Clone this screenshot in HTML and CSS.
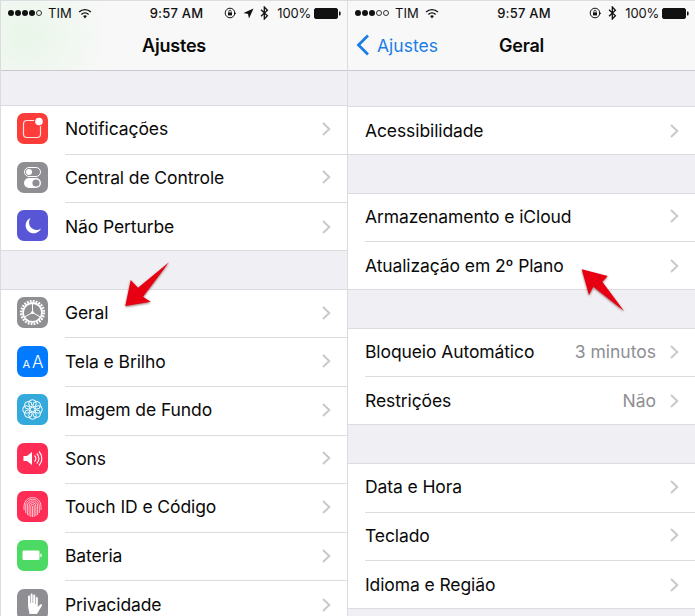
FILE: index.html
```html
<!DOCTYPE html>
<html lang="pt-BR">
<head>
    <meta charset="UTF-8">
    <title>Ajustes e Geral</title>
    <link rel="stylesheet" href="styles.css">
</head>
<body>
    <svg class="defs" width="0" height="0">
        <symbol id="chevron" viewBox="0 0 9 14"><path d="M1 1l6.300 6L1 13" fill="none" stroke="#c7c7cc" stroke-width="1.900"/></symbol>
        <symbol id="wifi" viewBox="0 0 14 11"><path d="M.6 3.600a9 9 0 0 1 12.800 0l-1 1a7.600 7.600 0 0 0-10.800 0zM2.900 5.900a5.800 5.800 0 0 1 8.200 0l-1 1a4.400 4.400 0 0 0-6.200 0zM5.100 8.100a2.700 2.700 0 0 1 3.800 0L7 10.400z" fill="#111"/></symbol>
        <symbol id="lock" viewBox="0 0 13 12"><circle cx="6" cy="6" r="4.800" fill="none" stroke="#111" stroke-width="1"/><rect x="4" y="5.400" width="4" height="3" fill="#111"/><path d="M4.800 5.400V4.400a1.200 1.200 0 0 1 2.400 0v1" fill="none" stroke="#111" stroke-width=".8"/><path d="M10 5.200l2.400 1L10 7.400z" fill="#111"/></symbol>
        <symbol id="bluetooth" viewBox="0 0 9 14"><path d="M1 3.800l6.400 6L4.300 13V1l3.100 3.200L1 10.200" fill="none" stroke="#111" stroke-width="1.300"/></symbol>
        <symbol id="battery" viewBox="0 0 27 11"><rect x=".5" y=".5" width="23" height="10" rx="1.500" fill="#111" stroke="#111"/><path d="M25 3.600h.6a1 1 0 0 1 1 1v1.800a1 1 0 0 1-1 1H25z" fill="#111"/></symbol>
    </svg>

    <div class="screens">
        <section class="screen">
            <header class="top top-tinted">
                <div class="status">
                    <div class="status-left">
                        <span class="signal"><i></i><i></i><i></i><i></i><i class="off"></i></span>
                        <span>TIM</span>
                        <svg class="ico-wifi"><use href="#wifi"/></svg>
                    </div>
                    <div class="status-time">9:57 AM</div>
                    <div class="status-right">
                        <svg class="ico-lock"><use href="#lock"/></svg>
                        <svg class="ico-location" viewBox="0 0 11 11"><path d="M10.500.5L6 10.500 5 6 .5 5z" fill="#111"/></svg>
                        <svg class="ico-bt"><use href="#bluetooth"/></svg>
                        <span class="battery-pct">100%</span>
                        <svg class="ico-battery"><use href="#battery"/></svg>
                    </div>
                </div>
                <div class="nav"><h1>Ajustes</h1></div>
            </header>

            <div class="group group-first">
                <div class="row">
                    <svg class="icon" viewBox="0 0 31 31">
                        <rect width="31" height="31" rx="7" fill="#fc3d39"/>
                        <rect x="6.500" y="7.500" width="17" height="17" rx="3.500" fill="none" stroke="#fff" stroke-width="1.200" opacity=".85"/>
                        <circle cx="22" cy="8.500" r="5" fill="#fc3d39"/>
                        <circle cx="22" cy="8.500" r="3.800" fill="#fff"/>
                    </svg>
                    <div class="row-body"><span class="label">Notificações</span><svg class="chevron"><use href="#chevron"/></svg></div>
                </div>
                <div class="row">
                    <svg class="icon" viewBox="0 0 31 31">
                        <rect width="31" height="31" rx="7" fill="#8e8e93"/>
                        <rect x="7.500" y="5.500" width="16" height="9" rx="4.500" fill="none" stroke="#fff" stroke-width="1"/>
                        <circle cx="12" cy="10" r="3" fill="#fff"/>
                        <rect x="7" y="16" width="17" height="10" rx="5" fill="#fff"/>
                        <circle cx="19" cy="21" r="3.600" fill="#8e8e93"/>
                    </svg>
                    <div class="row-body"><span class="label">Central de Controle</span><svg class="chevron"><use href="#chevron"/></svg></div>
                </div>
                <div class="row">
                    <svg class="icon" viewBox="0 0 31 31">
                        <rect width="31" height="31" rx="7" fill="#5856d6"/>
                        <path d="M13.500 8a8 8 0 1 0 10.500 10.500 7.500 7.500 0 0 1-10.500-10.500z" fill="#fff"/>
                    </svg>
                    <div class="row-body"><span class="label">Não Perturbe</span><svg class="chevron"><use href="#chevron"/></svg></div>
                </div>
            </div>

            <div class="group">
                <div class="row">
                    <svg class="icon" viewBox="0 0 31 31">
                        <rect width="31" height="31" rx="7" fill="#8e8e93"/>
                        <circle cx="15.500" cy="15.500" r="9.500" fill="none" stroke="#fff" stroke-width="1.800"/>
                        <circle cx="15.500" cy="15.500" r="11.400" fill="none" stroke="#fff" stroke-width="2.400" stroke-dasharray="1.800 1.180"/>
                        <path d="M15.500 15.500V7M15.500 15.500l7.400 4.200M15.500 15.500l-7.400 4.200" stroke="#fff" stroke-width="1"/>
                        <circle cx="15.500" cy="15.500" r="1.600" fill="#fff"/>
                    </svg>
                    <div class="row-body"><span class="label">Geral</span><svg class="chevron"><use href="#chevron"/></svg></div>
                </div>
                <div class="row">
                    <svg class="icon" viewBox="0 0 31 31">
                        <rect width="31" height="31" rx="7" fill="#007aff"/>
                        <text x="5.500" y="21.500" class="aa-small">A</text>
                        <text x="15" y="21.500" class="aa-big">A</text>
                    </svg>
                    <div class="row-body"><span class="label">Tela e Brilho</span><svg class="chevron"><use href="#chevron"/></svg></div>
                </div>
                <div class="row">
                    <svg class="icon" viewBox="0 0 31 31">
                        <rect width="31" height="31" rx="7" fill="#34aadc"/>
                        <g fill="none" stroke="#fff" stroke-width="1">
                            <circle cx="15.500" cy="9.500" r="3.800"/><circle cx="15.500" cy="21.500" r="3.800"/>
                            <circle cx="9.500" cy="15.500" r="3.800"/><circle cx="21.500" cy="15.500" r="3.800"/>
                            <circle cx="11.300" cy="11.300" r="3.800"/><circle cx="19.700" cy="11.300" r="3.800"/>
                            <circle cx="11.300" cy="19.700" r="3.800"/><circle cx="19.700" cy="19.700" r="3.800"/>
                        </g>
                    </svg>
                    <div class="row-body"><span class="label">Imagem de Fundo</span><svg class="chevron"><use href="#chevron"/></svg></div>
                </div>
                <div class="row">
                    <svg class="icon" viewBox="0 0 31 31">
                        <rect width="31" height="31" rx="7" fill="#ff2d55"/>
                        <path d="M6.500 13h3.500l5-4v13l-5-4H6.500z" fill="#fff"/>
                        <path d="M17.500 12.500a4 4 0 0 1 0 6M19.800 10.500a7 7 0 0 1 0 10M22 8.500a10 10 0 0 1 0 14" fill="none" stroke="#fff" stroke-width="1.100"/>
                    </svg>
                    <div class="row-body"><span class="label">Sons</span><svg class="chevron"><use href="#chevron"/></svg></div>
                </div>
                <div class="row">
                    <svg class="icon" viewBox="0 0 31 31">
                        <rect width="31" height="31" rx="7" fill="#ff2d55"/>
                        <g fill="none" stroke="#fff" stroke-width=".7">
                            <path d="M7 19v-4a8.500 8.500 0 0 1 17 0v4"/>
                            <path d="M8.700 22v-7a6.800 6.800 0 0 1 13.600 0v7"/>
                            <path d="M10.400 24v-9a5.100 5.100 0 0 1 10.200 0v9"/>
                            <path d="M12.100 25v-10a3.400 3.400 0 0 1 6.800 0v10"/>
                            <path d="M13.800 26V15a1.700 1.700 0 0 1 3.400 0v11"/>
                            <path d="M15.500 26V15"/>
                        </g>
                    </svg>
                    <div class="row-body"><span class="label">Touch ID e Código</span><svg class="chevron"><use href="#chevron"/></svg></div>
                </div>
                <div class="row">
                    <svg class="icon" viewBox="0 0 31 31">
                        <rect width="31" height="31" rx="7" fill="#4cd964"/>
                        <rect x="5.500" y="10.500" width="17" height="9.500" rx="1.200" fill="#fff"/>
                        <rect x="23.300" y="13.800" width="1.300" height="3" fill="#fff"/>
                    </svg>
                    <div class="row-body"><span class="label">Bateria</span><svg class="chevron"><use href="#chevron"/></svg></div>
                </div>
                <div class="row">
                    <svg class="icon" viewBox="0 0 31 31">
                        <rect width="31" height="31" rx="7" fill="#8e8e93"/>
                        <path d="M11 17V7.500a1 1 0 0 1 2 0V14h.6V5.500a1 1 0 0 1 2 0V14h.6V6.500a1 1 0 0 1 2 0V15h.6V9a1 1 0 0 1 2 0v9l2.500-2.500c1-1 2.400.2 1.600 1.300L20 25H12.500z" fill="#fff"/>
                    </svg>
                    <div class="row-body"><span class="label">Privacidade</span><svg class="chevron"><use href="#chevron"/></svg></div>
                </div>
            </div>
        </section>

        <section class="screen screen-right">
            <header class="top">
                <div class="status">
                    <div class="status-left">
                        <span class="signal"><i></i><i></i><i></i><i class="off"></i><i class="off"></i></span>
                        <span>TIM</span>
                        <svg class="ico-wifi"><use href="#wifi"/></svg>
                    </div>
                    <div class="status-time">9:57 AM</div>
                    <div class="status-right">
                        <svg class="ico-lock"><use href="#lock"/></svg>
                        <svg class="ico-bt"><use href="#bluetooth"/></svg>
                        <span class="battery-pct">100%</span>
                        <svg class="ico-battery"><use href="#battery"/></svg>
                    </div>
                </div>
                <div class="nav">
                    <div class="back">
                        <svg class="back-arrow" viewBox="0 0 14 22"><path d="M12 1.500L2.500 11l9.500 9.500" fill="none" stroke="#1a7ee6" stroke-width="2.800"/></svg>
                        <span>Ajustes</span>
                    </div>
                    <h1>Geral</h1>
                </div>
            </header>

            <div class="group group-first">
                <div class="row row-plain"><div class="row-body"><span class="label">Acessibilidade</span><svg class="chevron"><use href="#chevron"/></svg></div></div>
            </div>

            <div class="group">
                <div class="row row-plain"><div class="row-body"><span class="label">Armazenamento e iCloud</span><svg class="chevron"><use href="#chevron"/></svg></div></div>
                <div class="row row-plain"><div class="row-body"><span class="label">Atualização em 2º Plano</span><svg class="chevron"><use href="#chevron"/></svg></div></div>
            </div>

            <div class="group">
                <div class="row row-plain"><div class="row-body"><span class="label">Bloqueio Automático</span><span class="value">3 minutos</span><svg class="chevron"><use href="#chevron"/></svg></div></div>
                <div class="row row-plain"><div class="row-body"><span class="label">Restrições</span><span class="value">Não</span><svg class="chevron"><use href="#chevron"/></svg></div></div>
            </div>

            <div class="group">
                <div class="row row-plain"><div class="row-body"><span class="label">Data e Hora</span><svg class="chevron"><use href="#chevron"/></svg></div></div>
                <div class="row row-plain"><div class="row-body"><span class="label">Teclado</span><svg class="chevron"><use href="#chevron"/></svg></div></div>
                <div class="row row-plain"><div class="row-body"><span class="label">Idioma e Região</span><svg class="chevron"><use href="#chevron"/></svg></div></div>
            </div>
        </section>
    </div>

    <!-- red arrows drawn over the screenshot -->
    <svg class="arrow arrow-left" viewBox="120 258 54 52"><path d="M125.300 306L130.700 280 138 287.700 169 262.300 143 296.700 150.700 301.700z"/></svg>
    <svg class="arrow arrow-right" viewBox="578 265 50 50"><path d="M581.700 269.300L607.700 276 602.300 281.700 624 311 593.300 286.700 589 295z"/></svg>
</body>
</html>
```

FILE: styles.css
```css
* {
    margin: 0;
    padding: 0;
    box-sizing: border-box;
}

html, body {
    width: 695px;
    height: 616px;
    overflow: hidden;
}

body {
    position: relative;
    background: #fff;
    color: #0a0a0a;
    font-family: Inter, "Liberation Sans", sans-serif;
}

.defs {
    position: absolute;
}

.screens {
    display: flex;
    height: 616px;
    padding-top: 1px;
    padding-left: 1px;
    background: #dcdce0;
}

.screen {
    width: 346px;
    height: 615px;
    overflow: hidden;
    background: #efeff4;
    margin-right: 1px;
}

.screen-right {
    flex: 1;
    margin-right: 0;
}

/* status bar + nav bar */
.top {
    height: 70px;
    background: #f8f8f8;
    border-bottom: 1px solid #c9c9ce;
}

.top-tinted {
    background: radial-gradient(ellipse 80px 70px at 25px 35px, #e9f6e9, #f7f8f7 100%);
}

.status {
    display: grid;
    grid-template-columns: 1fr auto 1fr;
    align-items: center;
    height: 24px;
    padding: 0 6px 0 7px;
    font-size: 13px;
    color: #111;
}

.status-left, .status-right {
    display: flex;
    align-items: center;
}

.status-left {
    gap: 6px;
}

.status-right {
    justify-content: flex-end;
    gap: 6px;
}

.status-time {
    font-weight: 500;
    letter-spacing: 0.2px;
    transform: translateX(2px);
}

.signal {
    display: flex;
    gap: 1px;
}

.signal i {
    width: 6px;
    height: 6px;
    border-radius: 50%;
    background: #111;
}

.signal i.off {
    background: none;
    border: 1px solid #333;
}

.battery-pct {
    letter-spacing: -0.2px;
    margin-left: 2px;
}

.ico-wifi { width: 14px; height: 11px; }
.ico-lock { width: 13px; height: 12px; }
.ico-location { width: 11px; height: 11px; }
.ico-bt { width: 9px; height: 14px; }
.ico-battery { width: 27px; height: 11px; margin-left: -3px; }

.nav {
    position: relative;
    height: 41px;
    display: flex;
    align-items: center;
    justify-content: center;
}

.nav h1 {
    font-size: 18px;
    font-weight: 600;
    letter-spacing: -0.2px;
}

.back {
    position: absolute;
    left: 8px;
    top: 9px;
    display: flex;
    align-items: center;
    gap: 7px;
    font-size: 17.500px;
    color: #1a7ee6;
}

.back-arrow {
    width: 14px;
    height: 22px;
}

/* settings lists */
.group {
    margin-top: 37.600px;
    background: #fff;
    border-top: 1px solid #dcdce0;
    border-bottom: 1px solid #dcdce0;
}

.group-first {
    margin-top: 34px;
}

.screen-right .group-first {
    margin-top: 35px;
}

.row {
    display: flex;
    align-items: center;
    height: 48.600px;
    padding-left: 16px;
}

.row:last-child {
    height: 47px;
}

.row-plain {
    padding-left: 0;
}

.icon {
    flex: none;
    width: 31px;
    height: 31px;
    margin-bottom: 3px;
}

.row:last-child .icon {
    margin-bottom: 1.400px;
}

.row-body {
    flex: 1;
    min-width: 0;
    height: 100%;
    margin-left: 17px;
    padding-right: 16px;
    padding-bottom: 2px;
    display: flex;
    align-items: center;
    border-bottom: 1px solid #dcdce0;
}

.row:last-child .row-body {
    border-bottom: 0;
    padding-bottom: 0;
}

.label {
    flex: 1;
    font-size: 17.500px;
    letter-spacing: -0.1px;
}

.value {
    font-size: 17.500px;
    color: #8e8e93;
    margin-right: 14px;
}

.chevron {
    flex: none;
    width: 9px;
    height: 14px;
}

.aa-small {
    font-size: 11px;
    fill: #fff;
}

.aa-big {
    font-size: 17px;
    font-weight: 300;
    fill: #fff;
}

.arrow {
    position: absolute;
    fill: #e60012;
    filter: drop-shadow(0 1px 1px rgba(90, 0, 0, 0.6));
}

.arrow-left {
    left: 120px;
    top: 258px;
    width: 54px;
    height: 52px;
}

.arrow-right {
    left: 578px;
    top: 265px;
    width: 50px;
    height: 50px;
}
```
